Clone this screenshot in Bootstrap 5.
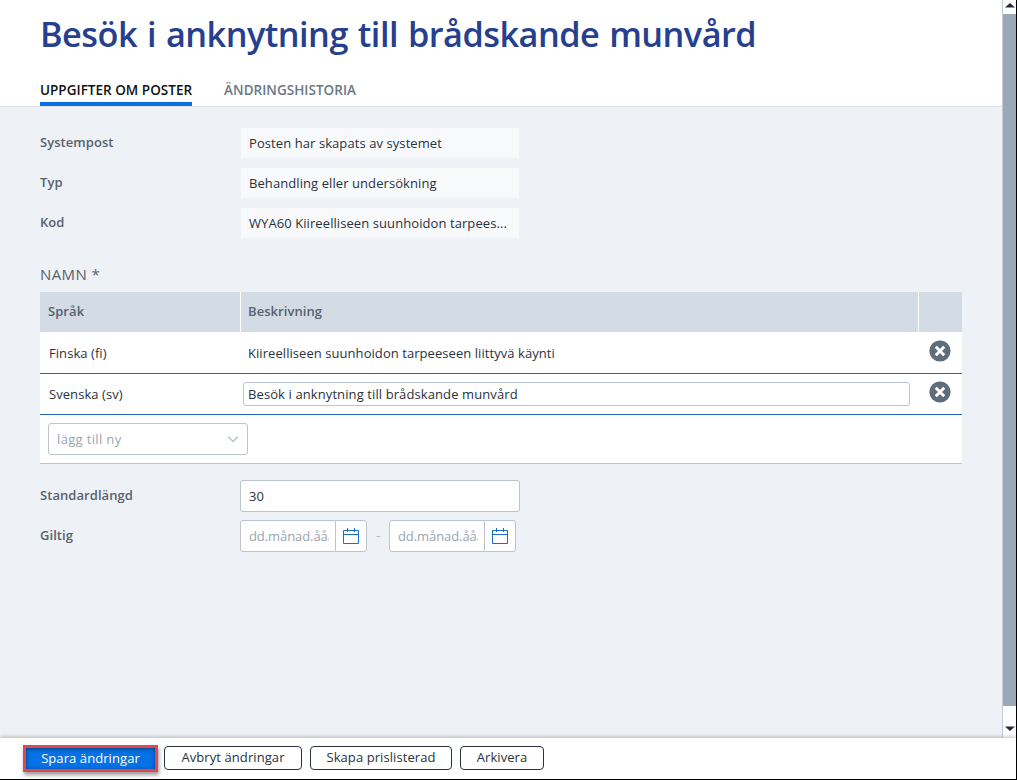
<!DOCTYPE html>
<html lang="sv">
<head>
  <meta charset="UTF-8">
  <meta name="viewport" content="width=device-width, initial-scale=1.0">
  <title>Besök i anknytning till brådskande munvård</title>
  <link href="https://cdn.jsdelivr.net/npm/bootstrap@5.3.0/dist/css/bootstrap.min.css" rel="stylesheet">
  <style>
    body {
      font-family: "Open Sans", "Noto Sans", sans-serif;
      font-size: 13px;
      line-height: 20px;
      letter-spacing: .06px;
      color: #29323d;
      background-color: #fff;
    }
    .app-window {
      height: 780px;
      border-right: 1px solid #000;
      border-bottom: 1px solid #000;
    }
    .page-head {
      height: 107px;
      padding: 0 40px;
      border-bottom: 1px solid #dde2e8;
    }
    .page-title {
      font-size: 34.3px;
      line-height: 44px;
      font-weight: 600;
      letter-spacing: -.53px;
      word-spacing: 1.6px;
      color: #26408f;
      padding-top: 12px;
      white-space: nowrap;
    }
    .page-tabs {
      gap: 32px;
    }
    .page-tabs .nav-link {
      height: 28px;
      padding: 0;
      font-size: 13.5px;
      line-height: 25px;
      font-weight: 600;
      letter-spacing: .02px;
      color: #6b7785;
      border-bottom: 4px solid transparent;
    }
    .page-tabs .nav-link.active {
      color: #111;
      border-bottom-color: #0b6fe0;
    }
    .page-body {
      background-color: #eef1f6;
      padding: 20px 40px 0;
    }
    .field-row {
      height: 32px;
      margin-bottom: 8px;
    }
    .field-name {
      width: 200px;
      line-height: 31px;
      font-weight: 600;
      color: #56626f;
    }
    .value-box {
      width: 278px;
      height: 30px;
      margin: 1px;
      padding: 0 8px;
      line-height: 31px;
      letter-spacing: .08px;
      background-color: #f8f9fb;
    }
    .group-title {
      font-size: 15px;
      line-height: 20px;
      letter-spacing: .4px;
      margin: 25px 0 8px;
      color: #56626f;
    }
    .names-table {
      width: 922px;
      table-layout: fixed;
      background-color: #fff;
      border-collapse: separate;
      border-spacing: 0;
      border-bottom: 1px solid #bcc5cf;
      margin-bottom: 16px;
    }
    .names-table th {
      height: 40px;
      padding: 0 8px 2px;
      font-weight: 600;
      color: #56626f;
      background-color: #d3dce5;
    }
    .names-table th + th {
      border-left: 1px solid #fff;
      padding-left: 7px;
    }
    .names-table td {
      height: 41px;
      padding: 0 8px 0 9px;
      border-bottom: 1px solid #2468b0;
    }
    .names-table td.text-cell {
      padding-left: 8px;
    }
    .names-table td.input-cell {
      padding: 0 8px 0 3px;
    }
    .names-table td.icon-cell {
      padding: 0 0 4px 10px;
      line-height: 0;
    }
    .names-table tbody tr:first-child td {
      height: 42px;
      padding-top: 1px;
    }
    .names-table tbody tr:last-child td {
      height: 48px;
      padding: 0 8px;
      border-bottom: 0;
    }
    .form-control {
      height: 32px;
      padding: 0 8px;
      font-size: 13px;
      letter-spacing: .06px;
      color: #29323d;
      border-color: #bcc5cf;
      border-radius: 3px;
    }
    .form-control::placeholder {
      color: #9aa5b1;
    }
    .inline-input {
      height: 24px;
      padding: 0 4px;
      letter-spacing: .1px;
    }
    .length-input {
      width: 280px;
    }
    .add-select {
      width: 200px;
      height: 32px;
      padding: 0 8px;
      letter-spacing: .35px;
      color: #9aa5b1;
      border: 1px solid #bcc5cf;
      border-radius: 3px;
    }
    .date-group {
      width: 127px;
    }
    .date-group .form-control {
      padding-right: 6px;
      letter-spacing: -.08px;
    }
    .date-group .btn {
      width: 32px;
      padding: 0;
      line-height: 0;
      background-color: #fff;
      border-color: #bcc5cf;
      border-radius: 3px;
    }
    .date-sep {
      width: 22px;
      line-height: 30px;
      color: #b0b9c3;
    }
    .scroll-rail {
      width: 14px;
      border-left: 1px solid #c5ccd4;
      background-color: #fff;
    }
    .scroll-thumb {
      background-color: #9aa8b9;
    }
    .scroll-cap {
      height: 14px;
      line-height: 0;
    }
    .scroll-cap.cap-down {
      height: 32px;
    }
    .page-foot {
      height: 41px;
      padding: 8px 24px 0;
      gap: 8px;
      background-color: #fff;
      box-shadow: 0 -1px 4px rgba(0, 0, 0, .25);
      z-index: 1;
    }
    .page-foot .btn {
      height: 24px;
      padding: 0 0 2px;
      font-size: 13px;
      line-height: 20px;
      letter-spacing: .08px;
      color: #29323d;
      border: 1px solid #29323d;
      border-radius: 4px;
    }
    .page-foot .btn-save {
      width: 135px;
      height: 27px;
      margin: -1px -2px 0 -1px;
      line-height: 18px;
      color: #fff;
      background-color: #0672e8;
      border: 3px solid #e2474b;
      border-radius: 0;
      box-shadow: 1px 3px 4px rgba(0, 0, 0, .4), inset 0 1px 4px rgba(0, 0, 0, .45);
    }
    .page-foot .btn-cancel { width: 138px; }
    .page-foot .btn-create { width: 142px; }
    .page-foot .btn-archive { width: 84px; }
  </style>
</head>
<body>
  <div class="app-window d-flex flex-column overflow-hidden">
    <div class="d-flex flex-grow-1">
      <div class="d-flex flex-column flex-grow-1">
        <header class="page-head d-flex flex-column justify-content-between">
          <h1 class="page-title mb-0">Besök i anknytning till brådskande munvård</h1>
          <ul class="nav page-tabs flex-nowrap">
            <li class="nav-item"><a class="nav-link active" href="#">UPPGIFTER OM POSTER</a></li>
            <li class="nav-item"><a class="nav-link" href="#">ÄNDRINGSHISTORIA</a></li>
          </ul>
        </header>

        <main class="page-body flex-grow-1">
          <div class="field-row d-flex">
            <div class="field-name">Systempost</div>
            <div class="value-box text-truncate">Posten har skapats av systemet</div>
          </div>
          <div class="field-row d-flex">
            <div class="field-name">Typ</div>
            <div class="value-box text-truncate">Behandling eller undersökning</div>
          </div>
          <div class="field-row d-flex">
            <div class="field-name">Kod</div>
            <div class="value-box text-truncate">WYA60 Kiireelliseen suunhoidon tarpees...</div>
          </div>

          <h2 class="group-title fw-normal">NAMN *</h2>
          <table class="names-table align-middle">
            <colgroup>
              <col width="200">
              <col width="678">
              <col width="44">
            </colgroup>
            <thead>
              <tr>
                <th>Språk</th>
                <th>Beskrivning</th>
                <th></th>
              </tr>
            </thead>
            <tbody>
              <tr>
                <td>Finska (fi)</td>
                <td class="text-cell">Kiireelliseen suunhoidon tarpeeseen liittyvä käynti</td>
                <td class="icon-cell">
                  <svg width="24" height="24" viewBox="0 0 24 24"><circle cx="12" cy="12" r="10.6" fill="#5f6c7a"/><path d="M7.800 7.800l8.400 8.400M16.200 7.800l-8.400 8.400" stroke="#fff" stroke-width="3"/></svg>
                </td>
              </tr>
              <tr>
                <td>Svenska (sv)</td>
                <td class="input-cell"><input type="text" class="form-control inline-input" value="Besök i anknytning till brådskande munvård"></td>
                <td class="icon-cell">
                  <svg width="24" height="24" viewBox="0 0 24 24"><circle cx="12" cy="12" r="10.6" fill="#5f6c7a"/><path d="M7.800 7.800l8.400 8.400M16.200 7.800l-8.400 8.400" stroke="#fff" stroke-width="3"/></svg>
                </td>
              </tr>
              <tr>
                <td colspan="3">
                  <div class="add-select d-flex align-items-center justify-content-between">
                    <span>lägg till ny</span>
                    <svg width="12" height="8" viewBox="0 0 12 8"><path d="M1 1.500l5 5 5-5" fill="none" stroke="#b7c0ca" stroke-width="1.300"/></svg>
                  </div>
                </td>
              </tr>
            </tbody>
          </table>

          <div class="field-row d-flex">
            <label class="field-name" for="length">Standardlängd</label>
            <div><input type="text" class="form-control length-input" id="length" value="30"></div>
          </div>
          <div class="field-row d-flex">
            <label class="field-name" for="validFrom">Giltig</label>
            <div class="input-group date-group flex-nowrap">
              <input type="text" class="form-control" id="validFrom" placeholder="dd.månad.åååå">
              <button class="btn" type="button">
                <svg width="16" height="17" viewBox="0 0 16 17" fill="none" stroke="#1b6ec2"><path d="M.5 2.500h15v13H.5zM.5 6.500h15M4.500 0v4M11.500 0v4"/></svg>
              </button>
            </div>
            <div class="date-sep text-center">-</div>
            <div class="input-group date-group flex-nowrap">
              <input type="text" class="form-control" id="validTo" placeholder="dd.månad.åååå">
              <button class="btn" type="button">
                <svg width="16" height="17" viewBox="0 0 16 17" fill="none" stroke="#1b6ec2"><path d="M.5 2.500h15v13H.5zM.5 6.500h15M4.500 0v4M11.500 0v4"/></svg>
              </button>
            </div>
          </div>
        </main>
      </div>

      <div class="scroll-rail d-flex flex-column">
        <div class="scroll-cap"><svg width="13" height="14"><path d="M2 7.500h10l-5-4.500z" fill="#222a35"/></svg></div>
        <div class="scroll-thumb flex-grow-1"></div>
        <div class="scroll-cap cap-down d-flex align-items-end"><svg width="13" height="14"><path d="M2 2.500h10l-5 4.500z" fill="#222a35"/></svg></div>
      </div>
    </div>

    <footer class="page-foot d-flex position-relative">
      <button type="button" class="btn btn-save">Spara ändringar</button>
      <button type="button" class="btn btn-cancel">Avbryt ändringar</button>
      <button type="button" class="btn btn-create">Skapa prislisterad</button>
      <button type="button" class="btn btn-archive">Arkivera</button>
    </footer>
  </div>

  <script src="https://cdn.jsdelivr.net/npm/bootstrap@5.3.0/dist/js/bootstrap.bundle.min.js"></script>
</body>
</html>
